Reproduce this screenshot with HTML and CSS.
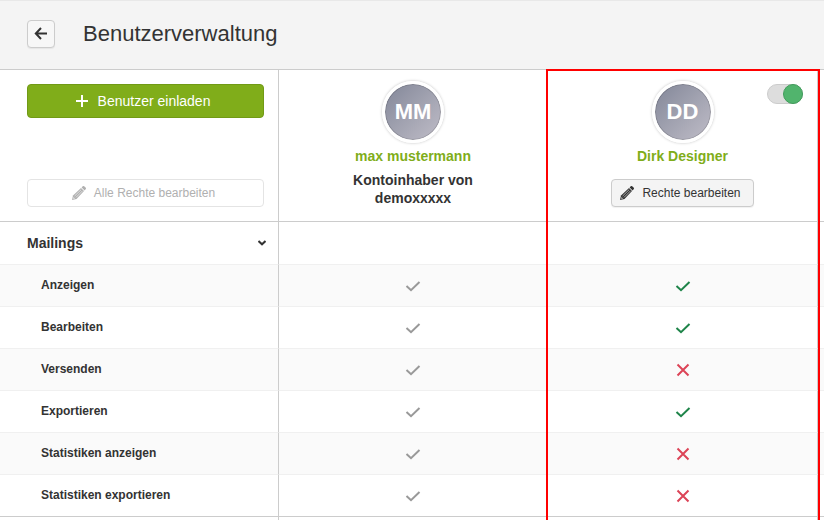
FILE: index.html
```html
<!DOCTYPE html>
<html lang="de">
<head>
<meta charset="utf-8">
<title>Benutzerverwaltung</title>
<link rel="stylesheet" href="styles.css">
</head>
<body>
<svg class="defs" aria-hidden="true">
  <symbol id="check" viewBox="0 0 16 16"><path d="M1.500 8 L6 12.200 L14.500 4" fill="none" stroke="currentColor" stroke-width="2"/></symbol>
  <symbol id="cross" viewBox="0 0 16 16"><path d="M2.500 2.500 L13.500 13.500 M13.500 2.500 L2.500 13.500" fill="none" stroke="currentColor" stroke-width="2"/></symbol>
  <symbol id="pencil" viewBox="0 0 16 16"><path d="M1 15 L2 10.500 L10 3 L13 6 L5.500 14 Z" fill="currentColor"/><path d="M10.600 2.400 L12 1 Q12.600 0.700 13.200 1.200 L14.800 2.800 Q15.300 3.400 14.800 4 L13.600 5.400 Z" fill="currentColor"/><path d="M3.600 11 L10.200 4.600 M5 12.400 L11.600 5.800" stroke="#fff" stroke-opacity=".65" stroke-width=".9"/><path d="M2.300 11.800 L4.200 13.700 L2.200 14 Z" fill="#fff" fill-opacity=".6"/></symbol>
</svg>
<div class="page">
  <header class="topbar">
    <button class="back" type="button" aria-label="Zurück">
      <svg viewBox="0 0 14 14" width="14" height="14"><path d="M13 6.500 H2 M7 1 L1.800 6.500 L7 12" fill="none" stroke="#333" stroke-width="2"/></svg>
    </button>
    <h1>Benutzerverwaltung</h1>
  </header>
  <table class="rights">
    <colgroup><col class="col-labels"><col class="col-owner"><col><col class="col-rest"></colgroup>
    <thead>
      <tr>
        <td>
          <div class="actions">
            <button class="btn invite" type="button">
              <svg viewBox="0 0 12 12" width="12" height="12"><path d="M6 0 V12 M0 6 H12" stroke="#fff" stroke-width="2"/></svg>
              Benutzer einladen
            </button>
            <button class="btn edit-all" type="button" disabled>
              <svg width="16" height="16"><use href="#pencil"/></svg>
              Alle Rechte bearbeiten
            </button>
          </div>
        </td>
        <th scope="col">
          <div class="user">
            <span class="avatar">MM</span>
            <a class="name" href="#">max mustermann</a>
            <p class="role">Kontoinhaber von demoxxxxx</p>
          </div>
        </th>
        <th scope="col" class="selected">
          <div class="user">
            <span class="avatar">DD</span>
            <a class="name" href="#">Dirk Designer</a>
            <button class="btn edit" type="button">
              <svg width="16" height="16"><use href="#pencil"/></svg>
              Rechte bearbeiten
            </button>
          </div>
          <input class="toggle" type="checkbox" role="switch" aria-label="Dirk Designer aktiv" checked>
          <span class="frame"></span>
        </th>
        <td></td>
      </tr>
    </thead>
    <tbody>
      <tr class="group">
        <th scope="rowgroup">
          <button class="fold" type="button" aria-expanded="true">Mailings
            <svg viewBox="0 0 8 6" width="8" height="6"><path d="M0.500 1 L4 4.300 L7.500 1" fill="none" stroke="#333" stroke-width="2"/></svg>
          </button>
        </th>
        <td></td><td></td><td></td>
      </tr>
      <tr class="odd"><th scope="row">Anzeigen</th><td><svg class="mark" role="img" aria-label="Ja"><use href="#check"/></svg></td><td><svg class="mark yes" role="img" aria-label="Ja"><use href="#check"/></svg></td><td></td></tr>
      <tr><th scope="row">Bearbeiten</th><td><svg class="mark" role="img" aria-label="Ja"><use href="#check"/></svg></td><td><svg class="mark yes" role="img" aria-label="Ja"><use href="#check"/></svg></td><td></td></tr>
      <tr class="odd"><th scope="row">Versenden</th><td><svg class="mark" role="img" aria-label="Ja"><use href="#check"/></svg></td><td><svg class="mark no" role="img" aria-label="Nein"><use href="#cross"/></svg></td><td></td></tr>
      <tr><th scope="row">Exportieren</th><td><svg class="mark" role="img" aria-label="Ja"><use href="#check"/></svg></td><td><svg class="mark yes" role="img" aria-label="Ja"><use href="#check"/></svg></td><td></td></tr>
      <tr class="odd"><th scope="row">Statistiken anzeigen</th><td><svg class="mark" role="img" aria-label="Ja"><use href="#check"/></svg></td><td><svg class="mark no" role="img" aria-label="Nein"><use href="#cross"/></svg></td><td></td></tr>
      <tr><th scope="row">Statistiken exportieren</th><td><svg class="mark" role="img" aria-label="Ja"><use href="#check"/></svg></td><td><svg class="mark no" role="img" aria-label="Nein"><use href="#cross"/></svg></td><td></td></tr>
    </tbody>
    <tbody>
      <tr class="group"><td></td><td></td><td></td><td></td></tr>
    </tbody>
  </table>
</div>
</body>
</html>
```
FILE: styles.css
```css
*, *::before { box-sizing: border-box; }
body {
  margin: 0;
  background: #fff;
  color: #333;
  font: 12px/18px "Liberation Sans", Arial, sans-serif;
}
.defs { position: absolute; width: 0; height: 0; }
.page { height: 100vh; overflow: hidden; }

.topbar {
  display: flex;
  align-items: center;
  gap: 28px;
  height: 70px;
  padding: 0 27px 2px;
  background: #f4f4f4;
  border-top: 1px solid #e8e8e8;
  border-bottom: 1px solid #ccc;
}
h1 { margin: 0; font-size: 22px; line-height: 28px; font-weight: 400; }
button { font: inherit; color: inherit; cursor: pointer; }
.back {
  display: flex;
  align-items: center;
  justify-content: center;
  width: 28px;
  height: 28px;
  padding: 0;
  background: #f7f7f7;
  border: 1px solid #ccc;
  border-radius: 4px;
  box-shadow: 0 1px 1px rgba(0, 0, 0, .06);
}

.rights {
  width: 100%;
  table-layout: fixed;
  border-collapse: separate;
  border-spacing: 0;
}
.col-labels { width: 279px; }
.col-owner { width: 269px; }
.col-rest { width: 6px; }
.rights th, .rights td {
  height: 42px;
  padding: 0 0 2px;
  border-right: 1px solid #ccc;
  border-top: 1px solid #f0f0f0;
  text-align: center;
  vertical-align: middle;
}
.rights tr > :last-child { border-right: 0; }
.rights thead th, .rights thead td { height: 151px; padding: 0; border-top: 0; vertical-align: top; }
.rights .group > * { height: 43px; border-top-color: #ccc; }
.rights .odd > * { background: #fafafa; }
.rights tbody th { padding-left: 41px; text-align: left; }
.rights .group th { padding: 0; }

.actions {
  display: flex;
  flex-direction: column;
  justify-content: space-between;
  height: 151px;
  padding: 14px 14px 14px 27px;
}
.btn {
  display: flex;
  align-items: center;
  justify-content: center;
  gap: 7px;
  height: 28px;
  padding: 0 12px 0 7px;
  border: 1px solid #ccc;
  border-radius: 4px;
}
.invite {
  gap: 10px;
  height: 34px;
  background: #80ad1a;
  border-color: #719a16;
  color: #fff;
  font-size: 14px;
}
.edit-all { background: #fff; border-color: #e4e4e4; color: #b0b0b0; cursor: default; }
.edit { background: #f4f4f4; box-shadow: 0 1px 1px rgba(0, 0, 0, .06); }

.user { display: flex; flex-direction: column; align-items: center; padding-top: 11px; }
.avatar {
  width: 62px;
  height: 62px;
  border: 3px solid #fff;
  border-radius: 50%;
  background: linear-gradient(135deg, #7f8496, #c3c0ca) border-box;
  background-clip: padding-box;
  box-shadow: 0 0 3px rgba(0, 0, 0, .25), inset 0 0 0 1px rgba(0, 0, 0, .15);
  color: #fff;
  font-size: 22px;
  line-height: 56px;
}
.name { margin: 4px 0 6px; color: #80ad1a; font-size: 14px; text-decoration: none; }
.role { width: 140px; margin: 0; font-size: 14px; }
.user .edit { margin-top: 8px; font-weight: 400; }

.selected { position: relative; }
.toggle {
  appearance: none;
  position: absolute;
  top: 14px;
  right: 14px;
  width: 36px;
  height: 20px;
  margin: 0;
  border: 1px solid #ccc;
  border-radius: 10px;
  background: #ddd;
}
.toggle::before {
  content: "";
  display: block;
  width: 20px;
  height: 20px;
  margin: -1px;
  border: 1px solid #419c5b;
  border-radius: 50%;
  background: #51b46d;
}
.toggle:checked::before { margin-left: 15px; }
.frame {
  position: absolute;
  top: -1px;
  left: -2px;
  right: -3px;
  height: 100vh;
  border: 2px solid #f00;
  pointer-events: none;
}

.fold {
  display: flex;
  align-items: center;
  justify-content: space-between;
  width: 100%;
  padding: 0 12px 0 27px;
  border: 0;
  background: none;
  font-size: 14px;
  font-weight: 700;
}
.mark { display: block; width: 16px; height: 16px; margin: 2px auto 0; color: #999; }
.yes { color: #1e8449; }
.no { color: #dc4457; }
```
